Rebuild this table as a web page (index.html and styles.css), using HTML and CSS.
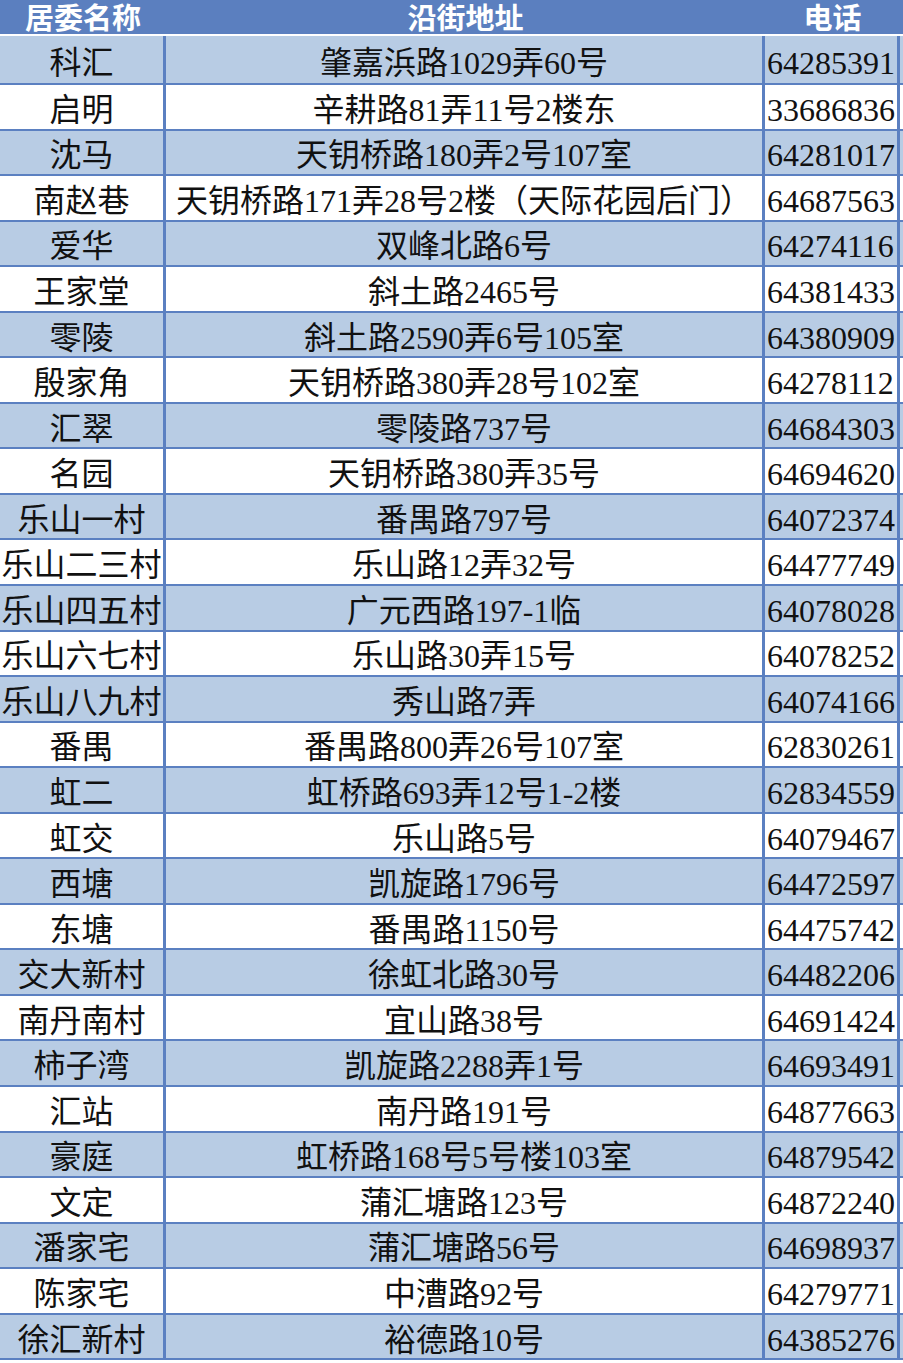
FILE: index.html
```html
<!DOCTYPE html>
<html lang="zh-CN">
<head>
<meta charset="utf-8">
<title>居委会联系表</title>
<link rel="stylesheet" href="styles.css">
</head>
<body>
<div class="sheet">
  <div class="head">
    <div class="h">居委名称</div>
    <div class="h">沿街地址</div>
    <div class="h">电话</div>
    <div class="h"></div>
  </div>
  <div class="gap"></div>
  <div class="body">
    <div class="row"><div class="c name">科汇</div><div class="c addr">肇嘉浜路1029弄60号</div><div class="c tel">64285391</div><div class="c pad"></div></div>
    <div class="row"><div class="c name">启明</div><div class="c addr">辛耕路81弄11号2楼东</div><div class="c tel">33686836</div><div class="c pad"></div></div>
    <div class="row"><div class="c name">沈马</div><div class="c addr">天钥桥路180弄2号107室</div><div class="c tel">64281017</div><div class="c pad"></div></div>
    <div class="row"><div class="c name">南赵巷</div><div class="c addr">天钥桥路171弄28号2楼（天际花园后门）</div><div class="c tel">64687563</div><div class="c pad"></div></div>
    <div class="row"><div class="c name">爱华</div><div class="c addr">双峰北路6号</div><div class="c tel">64274116</div><div class="c pad"></div></div>
    <div class="row"><div class="c name">王家堂</div><div class="c addr">斜土路2465号</div><div class="c tel">64381433</div><div class="c pad"></div></div>
    <div class="row"><div class="c name">零陵</div><div class="c addr">斜土路2590弄6号105室</div><div class="c tel">64380909</div><div class="c pad"></div></div>
    <div class="row"><div class="c name">殷家角</div><div class="c addr">天钥桥路380弄28号102室</div><div class="c tel">64278112</div><div class="c pad"></div></div>
    <div class="row"><div class="c name">汇翠</div><div class="c addr">零陵路737号</div><div class="c tel">64684303</div><div class="c pad"></div></div>
    <div class="row"><div class="c name">名园</div><div class="c addr">天钥桥路380弄35号</div><div class="c tel">64694620</div><div class="c pad"></div></div>
    <div class="row"><div class="c name">乐山一村</div><div class="c addr">番禺路797号</div><div class="c tel">64072374</div><div class="c pad"></div></div>
    <div class="row"><div class="c name">乐山二三村</div><div class="c addr">乐山路12弄32号</div><div class="c tel">64477749</div><div class="c pad"></div></div>
    <div class="row"><div class="c name">乐山四五村</div><div class="c addr">广元西路197-1临</div><div class="c tel">64078028</div><div class="c pad"></div></div>
    <div class="row"><div class="c name">乐山六七村</div><div class="c addr">乐山路30弄15号</div><div class="c tel">64078252</div><div class="c pad"></div></div>
    <div class="row"><div class="c name">乐山八九村</div><div class="c addr">秀山路7弄</div><div class="c tel">64074166</div><div class="c pad"></div></div>
    <div class="row"><div class="c name">番禺</div><div class="c addr">番禺路800弄26号107室</div><div class="c tel">62830261</div><div class="c pad"></div></div>
    <div class="row"><div class="c name">虹二</div><div class="c addr">虹桥路693弄12号1-2楼</div><div class="c tel">62834559</div><div class="c pad"></div></div>
    <div class="row"><div class="c name">虹交</div><div class="c addr">乐山路5号</div><div class="c tel">64079467</div><div class="c pad"></div></div>
    <div class="row"><div class="c name">西塘</div><div class="c addr">凯旋路1796号</div><div class="c tel">64472597</div><div class="c pad"></div></div>
    <div class="row"><div class="c name">东塘</div><div class="c addr">番禺路1150号</div><div class="c tel">64475742</div><div class="c pad"></div></div>
    <div class="row"><div class="c name">交大新村</div><div class="c addr">徐虹北路30号</div><div class="c tel">64482206</div><div class="c pad"></div></div>
    <div class="row"><div class="c name">南丹南村</div><div class="c addr">宜山路38号</div><div class="c tel">64691424</div><div class="c pad"></div></div>
    <div class="row"><div class="c name">柿子湾</div><div class="c addr">凯旋路2288弄1号</div><div class="c tel">64693491</div><div class="c pad"></div></div>
    <div class="row"><div class="c name">汇站</div><div class="c addr">南丹路191号</div><div class="c tel">64877663</div><div class="c pad"></div></div>
    <div class="row"><div class="c name">豪庭</div><div class="c addr">虹桥路168号5号楼103室</div><div class="c tel">64879542</div><div class="c pad"></div></div>
    <div class="row"><div class="c name">文定</div><div class="c addr">蒲汇塘路123号</div><div class="c tel">64872240</div><div class="c pad"></div></div>
    <div class="row"><div class="c name">潘家宅</div><div class="c addr">蒲汇塘路56号</div><div class="c tel">64698937</div><div class="c pad"></div></div>
    <div class="row"><div class="c name">陈家宅</div><div class="c addr">中漕路92号</div><div class="c tel">64279771</div><div class="c pad"></div></div>
    <div class="row"><div class="c name">徐汇新村</div><div class="c addr">裕德路10号</div><div class="c tel">64385276</div><div class="c pad"></div></div>
  </div>
</div>
</body>
</html>
```

FILE: styles.css
```css
html, body {
  margin: 0;
  padding: 0;
  background: #ffffff;
}

.sheet {
  width: 903px;
  overflow: hidden;
}

.head {
  display: grid;
  grid-template-columns: 166px 599px 135px 3px;
  height: 34px;
  background: #5b7fbf;
}

.h {
  display: flex;
  align-items: center;
  justify-content: center;
  color: #ffffff;
  font-family: "Noto Sans CJK SC", "Noto Sans", sans-serif;
  font-weight: 700;
  font-size: 29px;
  line-height: 30px;
  padding-bottom: 3px;
  box-sizing: border-box;
}

.gap {
  height: 2px;
  background: #ffffff;
}

.row {
  display: grid;
  grid-template-columns: 166px 599px 135px 3px;
  height: 45.55px;
  box-sizing: border-box;
  border-bottom: 2px solid #5b80c1;
  background: #ffffff;
}

.row:first-child {
  height: 49px;
  padding-top: 3px;
}

.row:nth-child(odd) {
  background: #b8cce4;
}

.c {
  box-sizing: border-box;
  display: flex;
  align-items: center;
  padding-top: 6px;
  font-family: "Liberation Serif", "Noto Sans CJK SC", serif;
  font-size: 32px;
  line-height: 1;
  color: #111111;
  white-space: nowrap;
  overflow: visible;
}

.name,
.addr,
.tel {
  border-right: 3px solid #5b80c1;
}

.row:first-child .c {
  margin-top: -3px;
}

.name,
.addr {
  justify-content: center;
}

.tel {
  padding-left: 2px;
}
```
